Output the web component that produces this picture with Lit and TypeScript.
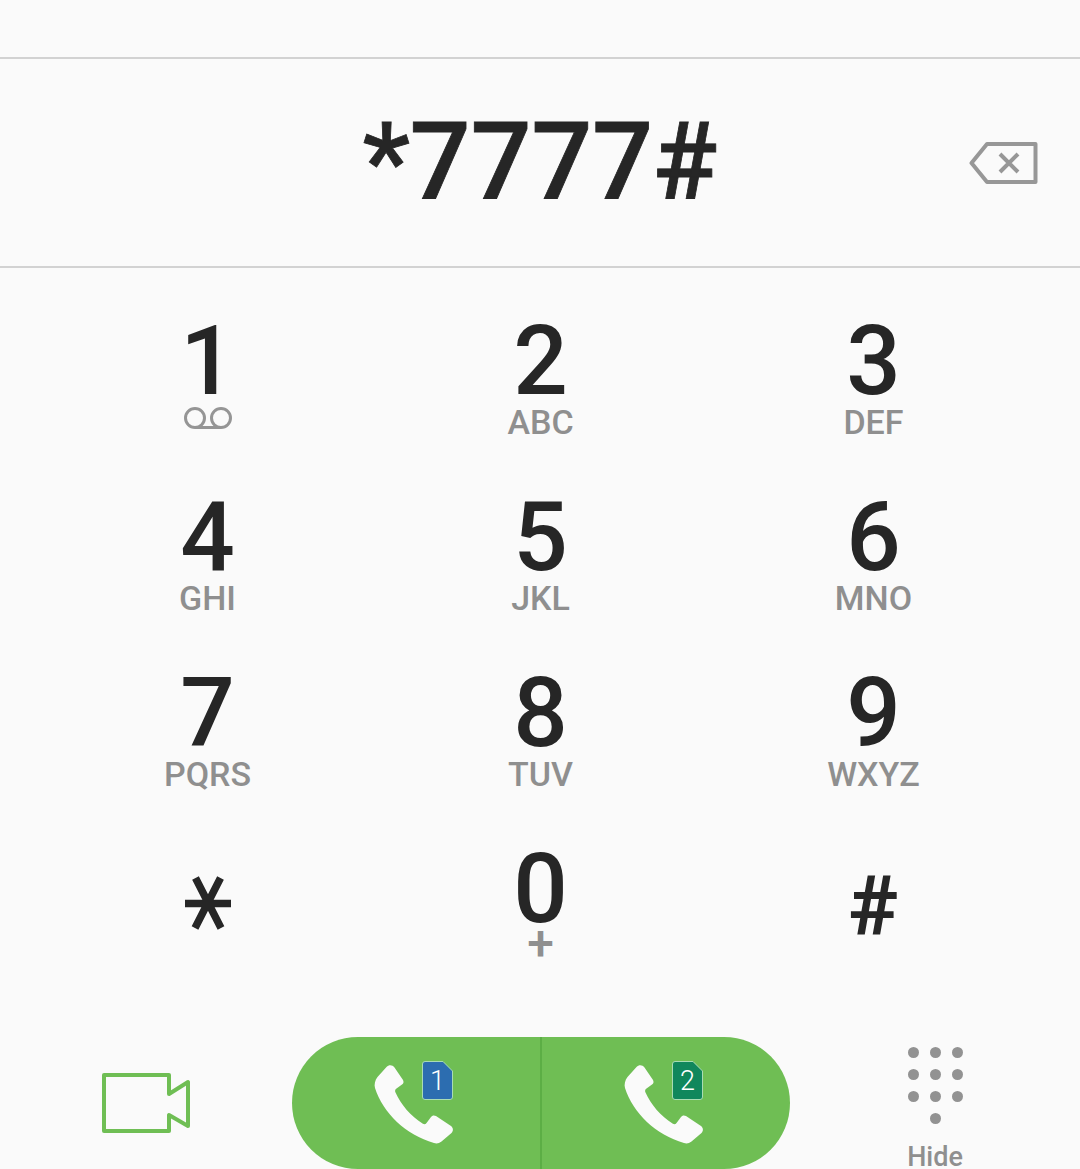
import { LitElement, html, css, svg } from "lit";
import { customElement } from "lit/decorators.js";

const KEYS: [string, string][] = [
  ["1", "vm"], ["2", "ABC"], ["3", "DEF"],
  ["4", "GHI"], ["5", "JKL"], ["6", "MNO"],
  ["7", "PQRS"], ["8", "TUV"], ["9", "WXYZ"],
  ["*", ""], ["0", "+"], ["#", ""],
];

const phone = svg`<path d="M16.500 7 C19 4.500 22.500 5 24.500 7.500 L33 20 C34 22 33.500 23.500 32 24.500 L26.500 28.500 C25 29.500 24.800 31 25.500 32.500 C31 45 41 56 52.500 63.500 C54 64.500 55.500 64.500 56.500 63 L61 57 C62 55.500 64 55 66 56 L81 66 C83.500 68 83.500 71 81.500 73 L71.500 81.500 C69 83.500 66.500 84 64 83 C36 75 13 53 5 28 C4 25 5 20 7.500 17 Z" fill="#fafafa"/>`;

@customElement("app-root")
export class AppRoot extends LitElement {
  static styles = css`
    :host {
      display: flex;
      flex-direction: column;
      width: 1080px;
      height: 1169px;
      overflow: hidden;
      background: #fafafa;
      font-family: Roboto, "Noto Sans", sans-serif;
    }
    .top { height: 57px; flex: none; border-bottom: 2px solid #d2d2d2; }
    .display {
      height: 207px; flex: none; border-bottom: 2px solid #d2d2d2;
      display: flex; align-items: center; justify-content: center; position: relative;
    }
    .number { font-size: 107px; font-weight: 500; color: #262626; line-height: 1; -webkit-text-stroke: 0.8px #262626; }
    .back { position: absolute; left: 969px; top: 83px; width: 69px; height: 42px; }
    .pad {
      flex: none; display: grid;
      grid-template-columns: repeat(3, 333px);
      grid-auto-rows: 176px;
      padding: 45px 0 0 41px;
      height: 766px; box-sizing: border-box;
    }
    .key { display: flex; flex-direction: column; align-items: center; }
    .digit { font-size: 96px; font-weight: 500; color: #262626; line-height: 96px; height: 96px; }
    .letters { font-size: 34px; font-weight: 500; color: #8f8f8f; line-height: 34px; height: 34px; margin-top: -4px; }
    .vm { display: block; width: 50px; height: 22px; margin-top: -2px; }
    .star-key { padding-top: 33px; }
    .star { display: block; width: 46px; height: 58px; }
    .hash { font-size: 84px; line-height: 84px; font-weight: 700; color: #262626; margin-top: 24px; }
    .plus { font-size: 48px; line-height: 34px; margin-top: -10px; font-weight: 500; color: #8f8f8f; }
    .bottom { flex: 1; display: flex; min-height: 0; }
    .video { width: 292px; flex: none; display: flex; justify-content: center; padding-top: 39px; box-sizing: border-box; }
    .video svg { width: 88px; height: 60px; }
    .pill {
      width: 498px; height: 132px; flex: none; display: flex;
      background: #6fbe54; border-radius: 66px; overflow: hidden; margin-top: 3px;
    }
    .half { flex: 1; position: relative; }
    .half + .half { border-left: 2px solid #5cae45; }
    .phone { position: absolute; left: 78px; top: 23px; width: 90px; height: 90px; }
    .sim {
      position: absolute; left: 130px; top: 24px; width: 31px; height: 39px;
      display: flex; align-items: center; justify-content: center;
      color: #fff; font-size: 27px; font-weight: 300;
    }
    .sim svg { position: absolute; inset: 0; width: 100%; height: 100%; }
    .sim span { position: relative; }
    .hide { flex: 1; display: flex; flex-direction: column; align-items: center; padding-top: 13px; }
    .dots { display: grid; grid-template-columns: repeat(3, 11px); grid-auto-rows: 11px; gap: 11px; }
    .dots i { display: block; width: 11px; height: 11px; border-radius: 50%; background: #929292; }
    .dots i.last { grid-column: 2; }
    .hide-label { font-size: 27px; font-weight: 500; color: #8f8f8f; line-height: 28px; margin-top: 19px; }
  `;

  private sim(n: string, color: string) {
    return html`<div class="sim">
      <svg viewBox="0 0 31 39"><path d="M3 .5 H21 L30.500 10 V36 a2.500 2.500 0 0 1 -2.500 2.500 H3 a2.500 2.500 0 0 1 -2.500 -2.500 V3 a2.500 2.500 0 0 1 2.500 -2.500 Z" fill="${color}" stroke="#a9dcb4" stroke-width="1"/></svg>
      <span>${n}</span>
    </div>`;
  }

  private renderKey(d: string, sub: string) {
    if (d === "*") {
      return html`<div class="key star-key"><svg class="star" viewBox="0 0 46 58" role="img" aria-label="*">
        <path d="M0 29.500 H46 M10.500 4 L36 54 M35.500 4 L10 54" stroke="#262626" stroke-width="7.500" fill="none"/></svg></div>`;
    }
    if (d === "#") return html`<div class="key"><span class="hash">#</span></div>`;
    return html`<div class="key">
      <span class="digit">${d}</span>
      ${sub === "vm"
        ? html`<svg class="vm" viewBox="0 0 50 22"><circle cx="12" cy="11" r="9.500" fill="none" stroke="#959595" stroke-width="3"/><circle cx="38" cy="11" r="9.500" fill="none" stroke="#959595" stroke-width="3"/><path d="M12 20.500 H38" stroke="#959595" stroke-width="3"/></svg>`
        : sub === "+" ? html`<span class="plus">+</span>`
        : html`<span class="letters">${sub}</span>`}
    </div>`;
  }

  render() {
    return html`
      <div class="top"></div>
      <div class="display">
        <span class="number">*7777#</span>
        <svg class="back" viewBox="0 0 69 42" fill="none" stroke="#979797" stroke-width="4">
          <path d="M18 2 H66.500 V40 H18 L2.500 21 Z" stroke-linejoin="round"/>
          <path d="M31 12 L49 30 M49 12 L31 30"/>
        </svg>
      </div>
      <div class="pad">${KEYS.map(([d, s]) => this.renderKey(d, s))}</div>
      <div class="bottom">
        <div class="video">
          <svg viewBox="0 0 88 60" fill="none" stroke="#6fbe54" stroke-width="4" stroke-linejoin="round">
            <path d="M2 2 H67 V21 L86 9 V53 L67 42 V58 H2 Z"/>
          </svg>
        </div>
        <div class="pill">
          <div class="half"><svg class="phone" viewBox="0 0 90 90">${phone}</svg>${this.sim("1", "#2c6db0")}</div>
          <div class="half"><svg class="phone" viewBox="0 0 90 90">${phone}</svg>${this.sim("2", "#10875c")}</div>
        </div>
        <div class="hide">
          <div class="dots"><i></i><i></i><i></i><i></i><i></i><i></i><i></i><i></i><i></i><i class="last"></i></div>
          <span class="hide-label">Hide</span>
        </div>
      </div>
    `;
  }
}
